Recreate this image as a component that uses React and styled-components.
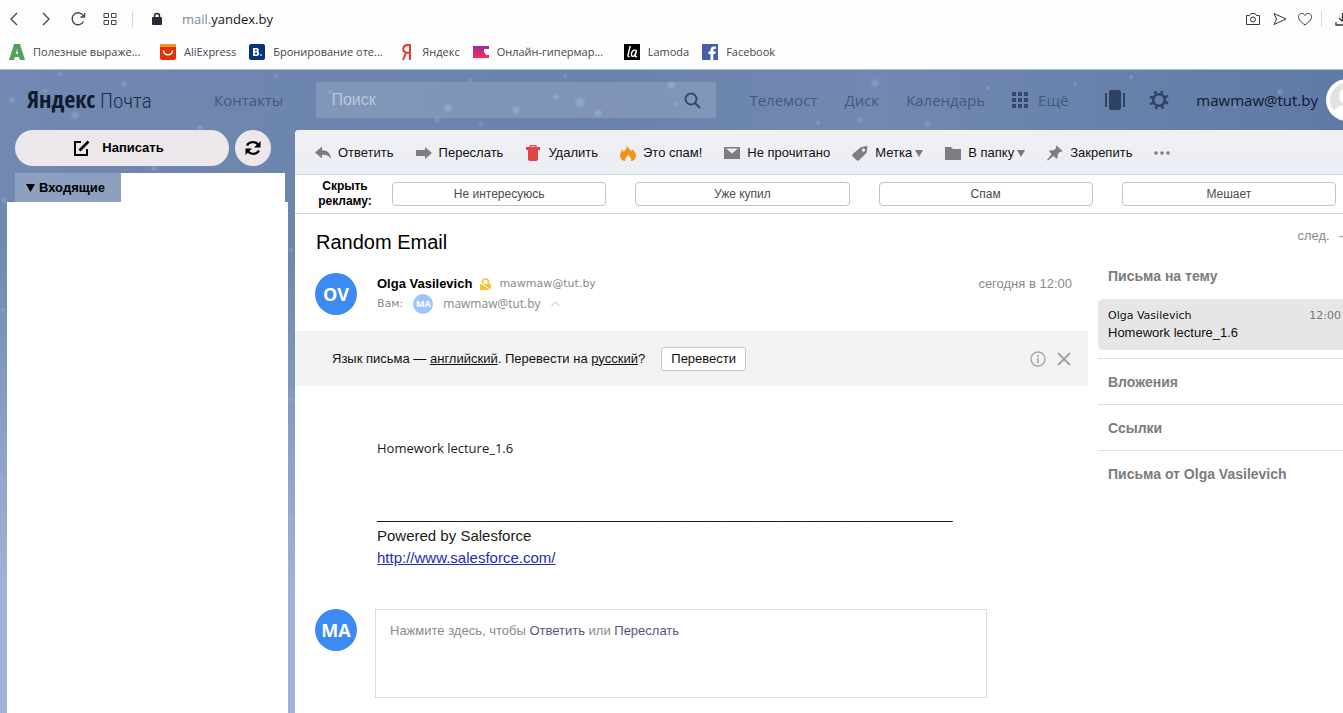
import React from 'react';
import styled, { createGlobalStyle } from 'styled-components';

const ui = '"Liberation Sans", Arial, sans-serif';
const humanist = '"Open Sans", "Noto Sans", sans-serif';
const small = '"DejaVu Sans", Verdana, sans-serif';

const Global = createGlobalStyle`
  * { box-sizing: border-box; }
  html, body { margin: 0; padding: 0; overflow-x: hidden; }
  body { font: 13px/16px ${ui}; color: #000; background: #fff; }
  button { font: inherit; color: inherit; border: 0; background: none; padding: 0; margin: 0; cursor: pointer; }
  h1, h2, p { margin: 0; }
  svg { display: block; flex: none; }
`;

const Page = styled.div`
  display: flex;
  flex-direction: column;
  min-height: 100vh;
  overflow: hidden;
`;

/* Browser chrome */
const AddressBar = styled.div`
  display: flex;
  align-items: center;
  height: 38px;
  padding-left: 6px;
  background: #fdfdfd;
`;
const ChromeButton = styled.button`
  display: flex;
  justify-content: center;
  width: 16px;
  margin-left: ${p => p.$ml || 0}px;
`;
const ChromeDivider = styled.span`
  width: 1px;
  height: 16px;
  margin: 0 ${p => p.$mr}px 0 ${p => p.$ml}px;
  background: #d5d7da;
`;
const Url = styled.div`
  flex: 1;
  margin-left: 19px;
  font: 13px/18px ${humanist};
  color: #16181c;
  span { color: #7b8ba5; }
`;
const Bookmarks = styled.nav`
  display: flex;
  align-items: center;
  gap: 13px;
  height: 32px;
  padding: 0 9px 4px;
  background: #fdfdfd;
  border-bottom: 1px solid #a9bcda;
`;
const Bookmark = styled.a`
  display: flex;
  align-items: center;
  gap: 8px;
  font: 11px/16px ${humanist};
  color: #44474d;
  text-decoration: none;
  white-space: nowrap;
  span { min-width: ${p => (p.$long ? 114 : 0)}px; }
`;

/* Mail shell */
const flakes = [
  [12, 30, 4], [75, 45, 5], [45, 21, 3], [60, 4, 3], [124, 14, 4], [154, 98, 4], [200, 58, 4], [276, 6, 3],
  [330, 22, 3], [448, 38, 5], [437, 50, 4], [516, 40, 5], [470, 10, 3], [481, 54, 3], [598, 43, 5], [556, 27, 4],
  [565, 6, 3], [580, 32, 6], [671, 15, 5], [676, 34, 3], [875, 13, 5], [818, 53, 3], [860, 50, 4], [927, 54, 4],
  [988, 18, 3], [1075, 14, 3], [1131, 7, 3], [1210, 39, 3], [1235, 36, 3], [1280, 22, 4], [4, 130, 4], [3, 240, 3],
  [291, 180, 3], [291, 330, 3], [3, 410, 3], [291, 450, 3],
].map(([x, y, r]) => `radial-gradient(circle at ${x}px ${y}px, rgba(180,200,228,.36) 0, rgba(180,200,228,.2) ${r - 2}px, transparent ${r}px)`).join(',');

const Mail = styled.div`
  display: flex;
  flex-direction: column;
  flex: 1;
  background:
    ${flakes},
    linear-gradient(180deg, rgba(165,184,218,0) 180px, rgba(165,184,218,.9) 520px),
    linear-gradient(90deg, #7189b0 0%, #6a83ac 45%, #7189b0 65%, #607aa6 100%);
`;
const Header = styled.header`
  display: flex;
  align-items: center;
  height: 60px;
  padding-left: 27px;
  font: 15px/24px ${humanist};
  white-space: nowrap;
`;
const Logo = styled.a`
  width: 187px;
  flex: none;
  font: 300 21px/32px "Roboto Condensed", Roboto, ${ui};
  color: #1c2b48;
  text-decoration: none;
  b { font: 700 24px/32px "Open Sans Condensed", "Roboto Condensed", Roboto, ${ui}; color: #101a2e; }
`;
const NavLink = styled.a`
  display: flex;
  align-items: center;
  gap: 10px;
  color: #43587d;
  text-decoration: none;
`;
const Search = styled.form`
  display: flex;
  align-items: center;
  flex: 1;
  height: 36px;
  margin: 0 33px;
  padding: 0 15px;
  border-radius: 2px;
  background: rgba(255,255,255,.14);
  color: #34486b;
  input {
    flex: 1;
    min-width: 0;
    padding: 0;
    border: 0;
    outline: 0;
    background: none;
    font: 16px/24px ${ui};
    color: #fff;
    &::placeholder { color: #b9c7df; opacity: 1; }
  }
`;
const Services = styled.nav`
  display: flex;
  align-items: center;
  flex: none;
  gap: 27px;
`;
const Account = styled.div`
  display: flex;
  align-items: center;
  flex: none;
  margin-left: 37px;
  color: #2f4265;
  button + button { margin-left: 23px; }
  button { flex: none; }
`;
const User = styled.a`
  margin-left: 27px;
  color: #101a2e;
  text-decoration: none;
`;
const UserPic = styled.div`
  width: 17px;
  height: 42px;
  margin-left: 8px;
  overflow: hidden;
`;

const Columns = styled.div`
  display: flex;
  flex: 1;
`;
const Sidebar = styled.aside`
  display: flex;
  flex-direction: column;
  flex: none;
  width: 295px;
  padding: 0 7px;
`;
const Compose = styled.div`
  display: flex;
  gap: 6px;
  padding: 0 8px 7px;
`;
const PillButton = styled.button`
  display: flex;
  align-items: center;
  justify-content: center;
  gap: 12px;
  width: ${p => (p.$wide ? 214 : 36)}px;
  height: 36px;
  padding-right: ${p => (p.$wide ? 6 : 0)}px;
  border-radius: 18px;
  background: #ebe7ea;
  font-weight: 700;
`;
const FolderRow = styled.div`
  display: flex;
  height: 29px;
  padding: 0 3px 0 8px;
`;
const Folder = styled.button`
  display: flex;
  align-items: center;
  gap: 4px;
  width: 106px;
  padding-left: 11px;
  background: #8ca1c0;
  font-weight: 700;
`;
const Blank = styled.div`
  flex: 1;
  background: #fff;
`;
const Content = styled.main`
  display: flex;
  flex-direction: column;
  flex: 1;
  min-width: 0;
  background: #fff;
  border-top-left-radius: 4px;
`;
const Toolbar = styled.div`
  display: flex;
  align-items: center;
  gap: 22px;
  height: 45px;
  padding: 2px 0 0 20px;
  border-bottom: 1px solid #d3dce3;
  border-top-left-radius: 4px;
  background: linear-gradient(180deg, #f1eff4, #ebeff6);
  white-space: nowrap;
`;
const Tool = styled.button`
  display: flex;
  align-items: center;
  gap: 7px;
  color: #111;
  svg { color: #7d7e80; }
`;
const Caret = styled.span`
  width: 0;
  border: 4px solid transparent;
  border-top: 7px solid #77787a;
  border-bottom: 0;
  margin-left: -4px;
`;
const AdRow = styled.div`
  display: grid;
  grid-template-columns: 68px repeat(4, 1fr);
  gap: 29px;
  align-items: center;
  height: 39px;
  padding: 0 7px 0 0;
  border-bottom: 1px solid #d6d6d6;
`;
const AdLabel = styled.div`
  padding-left: 16px;
  width: 84px;
  text-align: center;
  font: 700 12px/15px ${ui};
`;
const AdButton = styled.button`
  height: 24px;
  border: 1px solid #c3c3c3;
  border-radius: 4px;
  background: #fff;
  font-size: 12px;
  color: #4c4c4c;
`;
const Reading = styled.div`
  display: flex;
  flex: 1;
`;
const Letter = styled.article`
  flex: 1;
  min-width: 0;
  padding-top: 16px;
`;
const Subject = styled.h1`
  padding-left: 21px;
  font: 400 20px/24px ${ui};
`;
const LetterHead = styled.div`
  display: flex;
  gap: 20px;
  padding: 19px 16px 16px 20px;
`;
const Avatar = styled.div`
  display: flex;
  align-items: center;
  justify-content: center;
  flex: none;
  width: ${p => (p.$mini ? 20 : 42)}px;
  height: ${p => (p.$mini ? 20 : 42)}px;
  border-radius: 50%;
  background: ${p => (p.$mini ? '#9fc4fb' : '#3d8af2')};
  color: #fff;
  font: 700 ${p => (p.$mini ? 9 : 18)}px/20px ${humanist};
`;
const People = styled.div`
  flex: 1;
  padding-top: 1px;
`;
const Line = styled.div`
  display: flex;
  align-items: center;
  height: 20px;
  gap: ${p => p.$gap}px;
  color: #8a8a8a;
  font: ${p => (p.$small ? `11px/16px ${small}` : `12px/16px ${humanist}`)};
  b { font: 700 13px/16px ${ui}; color: #000; }
  small { font: 11px/16px ${small}; }
`;
const When = styled.time`
  line-height: 22px;
  color: #8a8a8a;
`;
const Translate = styled.div`
  display: flex;
  align-items: center;
  height: 55px;
  padding: 0 16px 0 37px;
  background: #f3f3f3;
  color: #111;
  a { color: inherit; }
`;
const TranslateButton = styled.button`
  width: 85px;
  height: 24px;
  margin: 0 auto 0 16px;
  border: 1px solid #c6c6c6;
  border-radius: 3px;
  background: #fff;
`;
const IconButton = styled.button`
  color: #a3a3a3;
  margin-left: 10px;
`;
const Body = styled.div`
  padding: 52px 0 40px 82px;
  font: 15px/22px ${ui};
  color: #1a1a1a;
  white-space: nowrap;
  overflow: hidden;
  a { color: #2a2ab4; }
`;
const Message = styled.p`
  font: 13px/20px ${humanist};
  padding-bottom: 45px;
`;
const Reply = styled.div`
  display: flex;
  gap: 18px;
  padding: 0 101px 15px 20px;
`;
const ReplyBox = styled.div`
  flex: 1;
  height: 89px;
  padding: 13px 14px;
  border: 1px solid #dcdcdc;
  color: #8a8a8a;
  a { color: #5b5483; text-decoration: none; }
`;
const Related = styled.aside`
  flex: none;
  width: 255px;
  padding: 12px 0 0 10px;
`;
const Next = styled.div`
  display: flex;
  justify-content: flex-end;
  gap: 9px;
  height: 20px;
  color: #8a8a8a;
  line-height: 20px;
`;
const Section = styled.h2`
  height: ${p => (p.$line ? 46 : 45)}px;
  padding-left: 10px;
  border-top: ${p => (p.$line ? '1px solid #dedede' : '0')};
  font: 700 14px/${p => (p.$line ? 47 : 60)}px ${ui};
  color: #7c7c7c;
`;
const Thread = styled.a`
  display: grid;
  grid-template-columns: 1fr auto;
  margin: 8px 0;
  height: 51px;
  padding: 8px 2px 0 10px;
  border-radius: 5px 0 0 5px;
  background: #e6e6e6;
  color: #111;
  text-decoration: none;
  align-content: start;
  font: 13px/18px ${ui};
  span, time { font: 11px/17px ${small}; }
  time { color: #777; }
`;

const stroke = { fill: 'none', stroke: 'currentColor' };

const Favicon = ({ kind }) => {
  switch (kind) {
    case 'a':
      return <svg width="16" height="16" viewBox="0 0 16 16"><path d="M0 16 5 0h6l5 16h-5l-1-3H6l-1 3zM7 10h2L8 5z" fill="#56a05f" /></svg>;
    case 'ali':
      return <svg width="16" height="16" viewBox="0 0 16 16"><rect width="16" height="16" rx="2" fill="#e62e05" /><path d="M2 0h12a2 2 0 0 1 2 2v1H0V2a2 2 0 0 1 2-2" fill="#f7971d" /><path d="M3.500 7c1 5 8 5 9 0" fill="none" stroke="#fff" strokeWidth="1.500" strokeLinecap="round" /></svg>;
    case 'booking':
      return <svg width="16" height="16" viewBox="0 0 16 16"><rect width="16" height="16" rx="2" fill="#06317d" /><path fillRule="evenodd" d="M4 4h3.500c2.600 0 2.900 2.800 1.500 3.600 2 .9 1.500 4.400-1.500 4.400H4zm2 1.600V7h1.200c1 0 1-1.400 0-1.400zm0 3v1.800h1.400c1.200 0 1.200-1.800 0-1.800z" fill="#fff" /><rect x="11" y="10" width="2" height="2" fill="#4cc0f5" /></svg>;
    case 'ya':
      return <svg width="14" height="16" viewBox="0 0 14 16"><path d="M10 16V1H7.500C2.500 1 2 7.500 6 8.500L3 16M10 8.800H6.500" fill="none" stroke="#e8372b" strokeWidth="2" /></svg>;
    case 'onliner':
      return <svg width="16" height="12" viewBox="0 0 16 12"><defs><linearGradient id="og" x1="0" y1="0" x2="0" y2="1"><stop offset="0" stopColor="#9b2c97" /><stop offset="1" stopColor="#ff2a56" /></linearGradient></defs><path d="M0 0h16v3h-5v3l2 3h3v3H0z" fill="url(#og)" /></svg>;
    case 'la':
      return <svg width="16" height="16" viewBox="0 0 16 16"><rect width="16" height="16" fill="#000" /><path d="M6.200 2 4 11c-.3 1.500.5 2 1.500 1M12.500 6.500C9 5 7 8.500 7.500 11s3 1.500 4-1.500l1-3-1.200 5c-.2 1.300.7 1.600 1.700.8" fill="none" stroke="#fff" strokeWidth="1.400" /></svg>;
    default:
      return <svg width="16" height="16" viewBox="0 0 16 16"><rect width="16" height="16" fill="#4460a0" /><path d="M8.500 16v-6H6.500V7.500h2V6c0-2.500 1.500-3.500 3.500-3.500h1.800V5h-1.200c-1 0-1.300.5-1.300 1.300v1.200h2.500l-.4 2.500h-2.100v6z" fill="#fff" /></svg>;
  }
};

const bookmarks = [
  ['a', 'Полезные выраже...', true], ['ali', 'AliExpress'], ['booking', 'Бронирование оте...', true],
  ['ya', 'Яндекс'], ['onliner', 'Онлайн-гипермар...', true], ['la', 'Lamoda'], ['fb', 'Facebook'],
];

const ToolIcon = ({ kind }) => {
  const d = {
    reply: <path d="M0 7.500 7 1.500v3.700c5 0 8.500 2.300 9 8.800-2-3.300-4.500-4.200-9-4.200v3.700z" />,
    forward: <path d="M0 5h9V2l7 6-7 6v-3H0z" />,
    trash: <path d="M5 0h6l1 2h3v3H1V2h3zm1 1.200L5.500 2h5l-.5-.8zM3 5h10v9q0 2-2 2H5q-2 0-2-2z" fill="#e14444" />,
    fire: <path fillRule="evenodd" d="M6.500 0c1 3 4 4 4.500 6.500.8-.5 1-1.500.8-2.500C14 5.500 16 8 16 10.500c0 3-2 5.500-5 5.500.8-2-.5-4-3-6-1.500 2-3.500 4-2.500 6-3.500 0-5.500-2.500-5.500-5.200 0-2.300 1.500-4 2-6.300 1 .6 1.400 1.300 1.500 2.300C6 5 7 3 6.500 0" fill="#f39314" />,
    unread: <path fillRule="evenodd" d="M0 2h16v12H0zm2 1.500 6 5 6-5z" />,
    label: <path fillRule="evenodd" d="M8.500 2.500 14 1q1.500 0 1.500 1.500L14.500 8 7 15.200q-1.500 1-2.800-.2L.8 11.500q-1-1.300 0-2.500zm3 1a1.600 1.600 0 1 0 .1 0" />,
    folder: <path d="M0 2h6l2 2h8v11H0z" />,
    pin: <path d="M9.500.5 15.500 6 14 7l-1-.3-2.500 2.800c.6 1.800.2 3.200-.8 4.300L6.500 11 1 15.500 0 15l4.500-5.800L2 6.300c1.200-1 2.600-1.300 4.300-.7L9.200 3l-.5-1.200z" />,
  }[kind];
  return <svg width="16" height="16" viewBox="0 0 16 16" fill="currentColor">{d}</svg>;
};

const tools = [
  ['reply', 'Ответить'], ['forward', 'Переслать'], ['trash', 'Удалить'], ['fire', 'Это спам!'],
  ['unread', 'Не прочитано'], ['label', 'Метка', true], ['folder', 'В папку', true], ['pin', 'Закрепить'],
];

const teeth = [0, 45, 90, 135, 180, 225, 270, 315];

export default function App() {
  return (
    <Page>
      <Global />
      <AddressBar>
        <ChromeButton aria-label="Назад"><svg width="10" height="14" viewBox="0 0 10 14" {...stroke} stroke="#3f434a" strokeWidth="1.300"><path d="M8 1 2 7l6 6" /></svg></ChromeButton>
        <ChromeButton $ml={16} aria-label="Вперёд"><svg width="10" height="14" viewBox="0 0 10 14" {...stroke} stroke="#3f434a" strokeWidth="1.300"><path d="m2 1 6 6-6 6" /></svg></ChromeButton>
        <ChromeButton $ml={16} aria-label="Обновить"><svg width="15" height="14" viewBox="0 0 15 14" {...stroke} stroke="#3f434a" strokeWidth="1.300"><path d="M12.500 9.500a6 6 0 1 1 0-5.500M13.500 1v4h-4" /></svg></ChromeButton>
        <ChromeButton $ml={16} aria-label="Экспресс-панель"><svg width="14" height="12" viewBox="0 0 14 12" {...stroke} stroke="#3f434a"><path d="M1 .5h4.500v4H1zm7.500 0H13v4H8.500zM1 7.500h4.500v4H1zm7.500 0H13v4H8.500z" /></svg></ChromeButton>
        <ChromeDivider $ml={14} $mr={18} />
        <svg width="12" height="14" viewBox="0 0 12 14"><rect x="1" y="5" width="10" height="8" rx="1" fill="#262c35" /><path d="M3.500 6V4a2.500 2.500 0 0 1 5 0v2" fill="none" stroke="#262c35" strokeWidth="1.500" /></svg>
        <Url><span>mail.</span>yandex.by</Url>
        <ChromeButton aria-label="Снимок"><svg width="16" height="14" viewBox="0 0 16 14" {...stroke} stroke="#33373e"><path d="M1.500 3.500h3l1.500-2h4l1.500 2h3v9h-13z" /><circle cx="8" cy="7.500" r="2.500" /></svg></ChromeButton>
        <ChromeButton $ml={11} aria-label="Отправить"><svg width="14" height="14" viewBox="0 0 14 14" {...stroke} stroke="#33373e"><path d="m1 1.500 12 5.500-12 5.500L3.500 7z" /></svg></ChromeButton>
        <ChromeButton $ml={9} aria-label="Избранное"><svg width="16" height="14" viewBox="0 0 16 14" {...stroke} stroke="#33373e"><path d="M8 13C4 10 1.500 7.500 1.500 4.700 1.500 1 6.500.3 8 3.500 9.500.3 14.500 1 14.500 4.700 14.500 7.500 12 10 8 13z" /></svg></ChromeButton>
        <ChromeDivider $ml={8} $mr={13} />
        <svg width="8" height="14" viewBox="0 0 8 14" {...stroke} stroke="#33373e" strokeWidth="1.300"><path d="M7.500 1v8M4 6l3.500 3.500M1 10v3h7" /></svg>
      </AddressBar>
      <Bookmarks>
        {bookmarks.map(([kind, label, long]) => (
          <Bookmark key={kind} href="#" $long={long}><Favicon kind={kind} /><span>{label}</span></Bookmark>
        ))}
      </Bookmarks>

      <Mail>
        <Header>
          <Logo href="#"><b>Яндекс</b> Почта</Logo>
          <NavLink href="#">Контакты</NavLink>
          <Search>
            <input type="text" placeholder="Поиск" aria-label="Поиск" />
            <button type="button" aria-label="Найти"><svg width="17" height="17" viewBox="0 0 17 17" {...stroke} strokeWidth="2"><circle cx="7" cy="7" r="5.500" /><path d="m11 11 5 5" /></svg></button>
          </Search>
          <Services>
            <NavLink href="#">Телемост</NavLink>
            <NavLink href="#">Диск</NavLink>
            <NavLink href="#">Календарь</NavLink>
            <NavLink href="#">
              <svg width="16" height="16" viewBox="0 0 16 16" fill="#34486b"><path d="M0 0h4v4H0zm6 0h4v4H6zm6 0h4v4h-4zM0 6h4v4H0zm6 0h4v4H6zm6 0h4v4h-4zM0 12h4v4H0zm6 0h4v4H6zm6 0h4v4h-4z" /></svg>
              Ещё
            </NavLink>
          </Services>
          <Account>
            <button aria-label="Оформление"><svg width="21" height="20" viewBox="0 0 21 20" fill="currentColor"><rect x="4" width="12" height="20" rx="2" /><rect y="3" width="2" height="14" /><rect x="18" y="3" width="2" height="14" /></svg></button>
            <button aria-label="Настройки">
              <svg width="20" height="20" viewBox="0 0 20 20">
                <circle cx="10" cy="10" r="5.800" {...stroke} strokeWidth="2.600" />
                {teeth.map(a => <rect key={a} x="8.700" y="0.300" width="2.600" height="3.500" fill="currentColor" transform={`rotate(${a + 20} 10 10)`} />)}
              </svg>
            </button>
            <User href="#">mawmaw@tut.by</User>
            <UserPic><svg width="42" height="42" viewBox="0 0 42 42"><circle cx="21" cy="21" r="21" fill="#fff" /><circle cx="21" cy="21" r="17" fill="#e2e2e2" /><circle cx="21" cy="17" r="8" fill="#fff" /><path d="M7 34c3-11 25-11 28 0-8 6-20 6-28 0" fill="#fff" /></svg></UserPic>
          </Account>
        </Header>

        <Columns>
          <Sidebar>
            <Compose>
              <PillButton $wide>
                <svg width="16" height="16" viewBox="0 0 16 16" {...stroke} strokeWidth="2"><path d="M7 2H1v13h12V9" /><path d="M5.500 10.500 14.500 1.500" strokeWidth="2.600" /></svg>
                Написать
              </PillButton>
              <PillButton aria-label="Проверить почту">
                <svg width="18" height="16" viewBox="0 0 18 16"><g {...stroke} strokeWidth="2.200"><path d="M3 5.500C5 1.500 11 1 14 4.500" /><path d="M15 10.500C13 14.500 7 15 4 11.500" /></g><path d="M16.500 1v6.500H10zM1.500 15V8.500H8z" /></svg>
              </PillButton>
            </Compose>
            <FolderRow>
              <Folder><svg width="9" height="8" viewBox="0 0 9 8"><path d="M0 0h9L4.500 8z" /></svg>Входящие</Folder>
              <Blank />
            </FolderRow>
            <Blank />
          </Sidebar>

          <Content>
            <Toolbar>
              {tools.map(([kind, label, menu]) => (
                <Tool key={kind}><ToolIcon kind={kind} />{label}{menu && <Caret />}</Tool>
              ))}
              <Tool aria-label="Ещё действия"><svg width="16" height="4" viewBox="0 0 16 4" fill="currentColor"><circle cx="2" cy="2" r="1.800" /><circle cx="8" cy="2" r="1.800" /><circle cx="14" cy="2" r="1.800" /></svg></Tool>
            </Toolbar>
            <AdRow>
              <AdLabel>Скрыть рекламу:</AdLabel>
              <AdButton>Не интересуюсь</AdButton>
              <AdButton>Уже купил</AdButton>
              <AdButton>Спам</AdButton>
              <AdButton>Мешает</AdButton>
            </AdRow>
            <Reading>
              <Letter>
                <Subject>Random Email</Subject>
                <LetterHead>
                  <Avatar>OV</Avatar>
                  <People>
                    <Line $gap={7} $small>
                      <b>Olga Vasilevich</b>
                      <svg width="13" height="12" viewBox="0 0 13 12"><rect x="1" y="6" width="11" height="6" fill="#f5c52e" /><path d="M3.500 6V4q0-3 3-3t3 3v2" fill="none" stroke="#f5c52e" strokeWidth="1.600" /><path d="m0 4 12 8" stroke="#fff" /></svg>
                      mawmaw@tut.by
                    </Line>
                    <Line $gap={10}>
                      <small>Вам:</small>
                      <Avatar $mini>MA</Avatar>
                      mawmaw@tut.by
                      <svg width="9" height="6" viewBox="0 0 9 6" {...stroke} stroke="#b5b5b5"><path d="m.5 5 4-4 4 4" /></svg>
                    </Line>
                  </People>
                  <When>сегодня в 12:00</When>
                </LetterHead>
                <Translate>
                  <span>Язык письма — <a href="#">английский</a>. Перевести на <a href="#">русский</a>?</span>
                  <TranslateButton>Перевести</TranslateButton>
                  <IconButton aria-label="Справка"><svg width="16" height="16" viewBox="0 0 16 16" {...stroke} strokeWidth="1.300"><circle cx="8" cy="8" r="7" /><path d="M8 7v5M8 4v2" strokeWidth="1.600" /></svg></IconButton>
                  <IconButton aria-label="Закрыть"><svg width="16" height="16" viewBox="0 0 16 16" {...stroke} strokeWidth="2"><path d="m2 2 12 12M14 2 2 14" /></svg></IconButton>
                </Translate>
                <Body>
                  <Message>Homework lecture_1.6</Message>
                  <p>{'_'.repeat(69)}</p>
                  <p>Powered by Salesforce</p>
                  <p><a href="#">http://www.salesforce.com/</a></p>
                </Body>
                <Reply>
                  <Avatar>MA</Avatar>
                  <ReplyBox>Нажмите здесь, чтобы <a href="#">Ответить</a> или <a href="#">Переслать</a></ReplyBox>
                </Reply>
              </Letter>
              <Related>
                <Next><span>след.</span><span>-</span></Next>
                <Section>Письма на тему</Section>
                <Thread href="#">
                  <span>Olga Vasilevich</span><time>12:00</time>
                  Homework lecture_1.6
                </Thread>
                <Section $line>Вложения</Section>
                <Section $line>Ссылки</Section>
                <Section $line>Письма от Olga Vasilevich</Section>
              </Related>
            </Reading>
          </Content>
        </Columns>
      </Mail>
    </Page>
  );
}
